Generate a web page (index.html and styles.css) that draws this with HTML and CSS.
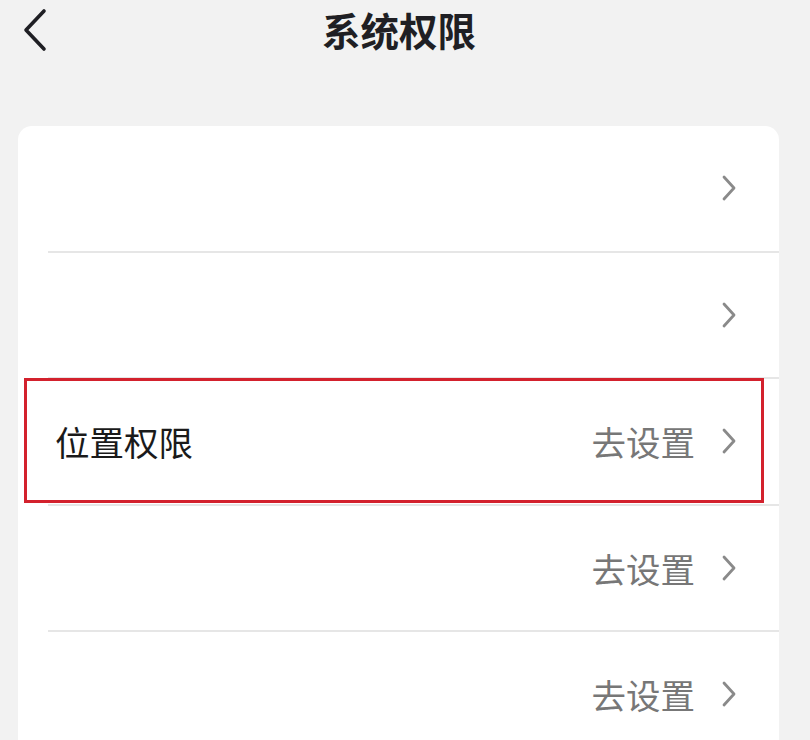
FILE: index.html
```html
<!DOCTYPE html>
<html lang="zh-CN">
<head>
  <meta charset="UTF-8">
  <meta name="viewport" content="width=device-width, initial-scale=1.0">
  <title>系统权限</title>
  <link rel="stylesheet" href="styles.css">
</head>
<body>
  <div class="header">
    <div class="back">
      <svg width="26" height="44" viewBox="0 0 26 44">
        <polyline points="22,3 4,22 22,41" fill="none" stroke="#1f1f24" stroke-width="3.6" stroke-linecap="round" stroke-linejoin="round"/>
      </svg>
    </div>
    <h1 class="title">系统权限</h1>
    <div></div>
  </div>

  <div class="card">
    <div class="row">
      <span class="label"></span>
      <span class="action"><span class="arrow"><svg width="16" height="26" viewBox="0 0 16 26"><polyline points="3,2 13,13 3,24" fill="none" stroke="#8a8a8a" stroke-width="2.8" stroke-linecap="round" stroke-linejoin="round"/></svg></span></span>
    </div>
    <div class="row">
      <span class="label"></span>
      <span class="action"><span class="arrow"><svg width="16" height="26" viewBox="0 0 16 26"><polyline points="3,2 13,13 3,24" fill="none" stroke="#8a8a8a" stroke-width="2.8" stroke-linecap="round" stroke-linejoin="round"/></svg></span></span>
    </div>
    <div class="row">
      <span class="label">位置权限</span>
      <span class="action">去设置<span class="arrow"><svg width="16" height="26" viewBox="0 0 16 26"><polyline points="3,2 13,13 3,24" fill="none" stroke="#8a8a8a" stroke-width="2.8" stroke-linecap="round" stroke-linejoin="round"/></svg></span></span>
    </div>
    <div class="row">
      <span class="label"></span>
      <span class="action">去设置<span class="arrow"><svg width="16" height="26" viewBox="0 0 16 26"><polyline points="3,2 13,13 3,24" fill="none" stroke="#8a8a8a" stroke-width="2.8" stroke-linecap="round" stroke-linejoin="round"/></svg></span></span>
    </div>
    <div class="row">
      <span class="label"></span>
      <span class="action">去设置<span class="arrow"><svg width="16" height="26" viewBox="0 0 16 26"><polyline points="3,2 13,13 3,24" fill="none" stroke="#8a8a8a" stroke-width="2.8" stroke-linecap="round" stroke-linejoin="round"/></svg></span></span>
    </div>
    <div class="highlight"></div>
  </div>
</body>
</html>
```

FILE: styles.css
```css
body {
  font-family: 'Noto Sans CJK SC', 'Noto Sans', sans-serif;
  margin: 0;
  background-color: #f2f2f2;
  height: 740px;
  overflow: hidden;
}
.header {
  display: grid;
  grid-template-columns: 1fr auto 1fr;
  align-items: center;
  height: 58px;
  padding: 0 34px 0 22px;
}
.back {
  display: flex;
  align-items: center;
  margin-top: 2px;
}
.title {
  margin: 0;
  font-size: 38.5px;
  font-weight: bold;
  color: #1f1f24;
  line-height: 1;
}
.card {
  position: relative;
  margin: 68px 0 0 18px;
  width: 761px;
  background: white;
  border-radius: 14px 14px 0 0;
}
.row {
  display: flex;
  justify-content: space-between;
  align-items: center;
  height: 126.5px;
  box-sizing: border-box;
  margin-left: 30px;
  padding: 0 42px 0 7px;
  border-bottom: 2px solid #e6e6e6;
}
.label {
  font-size: 34.5px;
  color: #1a1a1a;
  line-height: 1;
}
.action {
  display: flex;
  align-items: center;
  font-size: 34.5px;
  color: #777;
  line-height: 1;
}
.arrow {
  display: flex;
  margin-left: 26px;
}
.highlight {
  position: absolute;
  top: 252px;
  left: 6px;
  width: 740px;
  height: 125px;
  box-sizing: border-box;
  border: 3px solid #d3212d;
}
```
